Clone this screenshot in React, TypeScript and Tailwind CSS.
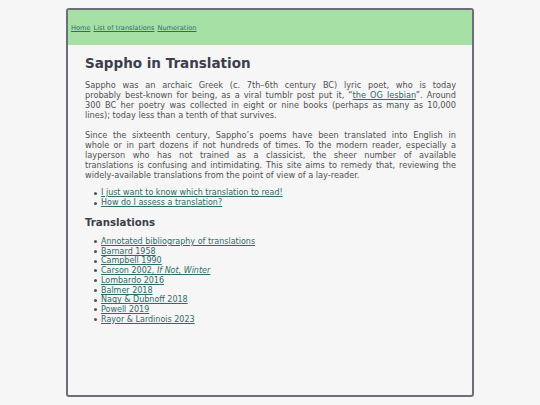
import React from 'react';

const links = [
  'Annotated bibliography of translations',
  'Barnard 1958',
  'Campbell 1990',
  'CARSON',
  'Lombardo 2016',
  'Balmer 2018',
  'Nagy & Dubnoff 2018',
  'Powell 2019',
  'Rayor & Lardinois 2023',
];

function A({ children }: { children: React.ReactNode }) {
  return <a href="#" className="text-[#2f6b66] underline">{children}</a>;
}

// one justified line of a paragraph (matches the reference's wrapping)
function L({ children }: { children: React.ReactNode }) {
  return <span className="block text-justify [text-align-last:justify]">{children}</span>;
}

function Li({ children }: { children: React.ReactNode }) {
  return (
    <li className="flex items-center">
      <span className="w-[3px] h-[3px] rounded-full bg-[#555] -ml-[7px] mr-[4px] shrink-0" />
      <span>{children}</span>
    </li>
  );
}

export default function App() {
  return (
    <div className="min-h-[405px] bg-[#f6f6f6] pt-2 pb-2 font-['DejaVu_Sans',sans-serif]">
      <div className="ml-[66px] w-[408px] h-[389px] border-2 border-[#6c6f7b] rounded-[3px] overflow-hidden bg-[#f6f6f6]">
        <div className="h-[35px] bg-[#a6e0a4] flex items-center pl-[3px] pt-[2px] text-[6.6px] gap-[3px]">
          <A>Home</A>
          <A>List of translations</A>
          <A>Numeration</A>
        </div>
        <div className="pl-[17px] pr-[16px] pt-[10px] text-[8px] leading-[10px] text-[#505050]">
          <h1 className="text-[13.5px] leading-[16px] font-bold text-[#3b3e4b] mb-[9px]">Sappho in Translation</h1>
          <p className="mb-[10px] text-[8.2px]">
            <L>Sappho was an archaic Greek (c. 7th–6th century BC) lyric poet, who is today</L>
            <L>probably best-known for being, as a viral tumblr post put it, “<A>the OG lesbian</A>”. Around</L>
            <L>300 BC her poetry was collected in eight or nine books (perhaps as many as 10,000</L>
            <span className="block">lines); today less than a tenth of that survives.</span>
          </p>
          <p className="mb-[8px] text-[8.2px]">
            <L>Since the sixteenth century, Sappho’s poems have been translated into English in</L>
            <L>whole or in part dozens if not hundreds of times. To the modern reader, especially a</L>
            <L>layperson who has not trained as a classicist, the sheer number of available</L>
            <L>translations is confusing and intimidating. This site aims to remedy that, reviewing the</L>
            <span className="block">widely-available translations from the point of view of a lay-reader.</span>
          </p>
          <ul className="pl-[16px] mb-[9px]">
            <Li><A>I just want to know which translation to read!</A></Li>
            <Li><A>How do I assess a translation?</A></Li>
          </ul>
          <h2 className="text-[10.2px] leading-[12px] font-bold text-[#3b3e4b] mb-[8px]">Translations</h2>
          <ul className="pl-[16px] leading-[9.7px]">
            {links.map(l => (
              <Li key={l}>
                {l === 'CARSON' ? <A>Carson 2002, <i>If Not, Winter</i></A> : <A>{l}</A>}
              </Li>
            ))}
          </ul>
        </div>
      </div>
    </div>
  );
}
